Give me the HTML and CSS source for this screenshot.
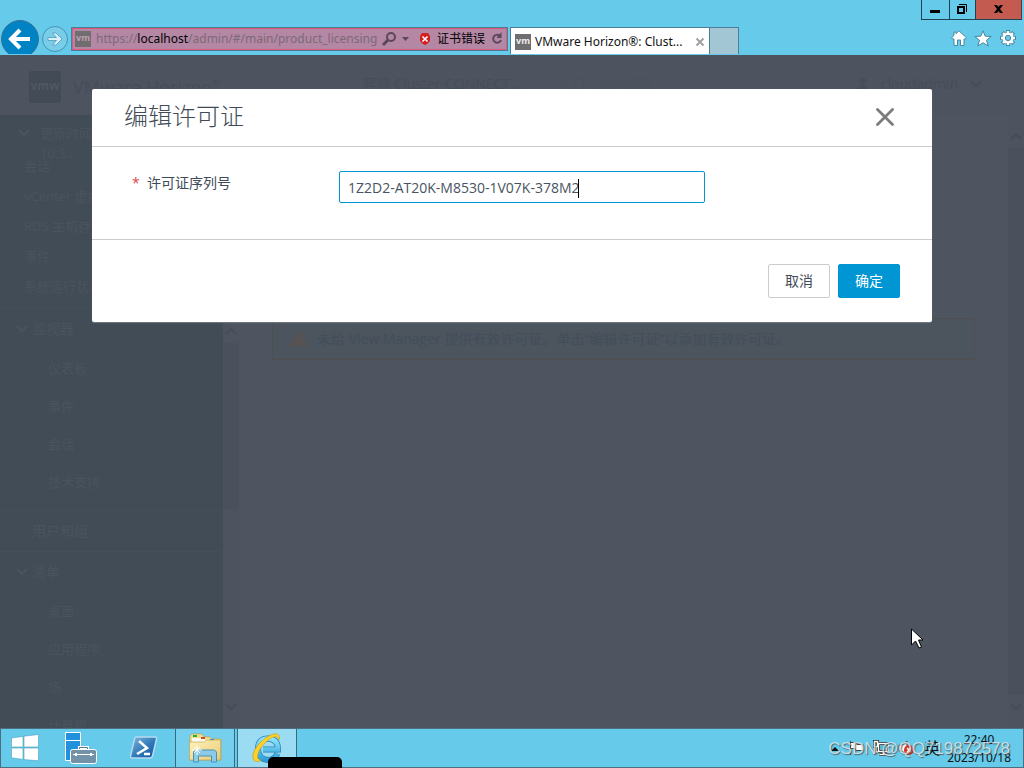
FILE: index.html
```html
<!DOCTYPE html>
<html lang="zh-CN">
<head>
<meta charset="utf-8">
<title>VMware Horizon®: Cluster</title>
<link rel="stylesheet" href="styles.css">
</head>
<body>
<header class="chrome">
  <div class="window-controls">
    <button class="win-btn" aria-label="最小化"><svg width="27" height="19" viewBox="0 0 27 19"><path d="M8 10h10v3H8z"/></svg></button>
    <button class="win-btn" aria-label="还原"><svg width="25" height="19" viewBox="0 0 25 19" fill="none" stroke="#000"><path d="M8 7h6v6H8z" stroke-width="2"/><path d="M9 4.500h7.500V12"/></svg></button>
    <button class="win-btn win-close" aria-label="关闭"><svg width="45" height="19" viewBox="0 0 45 19"><path d="M18 5h3l1.500 2L24 5h3l-3 4 3 4h-3l-1.500-2-1.500 2h-3l3-4z"/></svg></button>
  </div>
  <div class="nav">
    <button class="nav-back" aria-label="后退"><svg width="38" height="38" viewBox="0 0 38 38"><circle cx="19" cy="19" r="18.500" fill="#0083c5" stroke="#3a7390"/><path d="M29 19H11M19 10l-9 9 9 9" fill="none" stroke="#fff" stroke-width="4"/></svg></button>
    <button class="nav-forward" aria-label="前进"><svg width="28" height="28" viewBox="0 0 28 28"><circle cx="14" cy="14" r="12.500" fill="#7acde9" stroke="#4496b3"/><path d="M7 12.500h8.500l-4-4.500H15l6 6-6 6h-3.500l4-4.500H7z" fill="#d9f1fa" stroke="#4a9cbb" stroke-width=".8"/></svg></button>
    <div class="address">
      <span class="vm">vm</span>
      <span class="url">https://<b>localhost</b>/admin/#/main/product_licensing</span>
      <button class="plain" aria-label="搜索"><svg width="28" height="16" viewBox="0 0 28 16"><circle cx="9" cy="6" r="4" fill="none" stroke="#5b4757" stroke-width="2"/><path d="M6 9l-5 5" stroke="#5b4757" stroke-width="3"/><path d="M20 6h7l-3.500 4z" fill="#5b4757"/></svg></button>
      <span class="cert"><svg width="12" height="14" viewBox="0 0 12 14"><path d="M3 1h6l2 3v5l-3 3-2 1-2-1-3-3V4z" fill="#d21f1f"/><path d="M3.500 4.500l5 5m0-5l-5 5" stroke="#fff" stroke-width="1.600"/></svg>证书错误</span>
      <button class="plain" aria-label="刷新"><svg width="12" height="14" viewBox="0 0 12 14"><path d="M8.500 3.500A4 4 0 1 0 10 8" fill="none" stroke="#5b4757" stroke-width="2"/><path d="M10.500 0v6h-5z" fill="#5b4757"/></svg></button>
    </div>
    <div class="tab"><span class="vm">vm</span><span class="tab-title">VMware Horizon®: Clust...</span><button class="plain" aria-label="关闭选项卡"><svg width="10" height="10" viewBox="0 0 10 10"><path d="M1.500 1.500l7 7m0-7l-7 7" stroke="#a1a1a1" stroke-width="2"/></svg></button></div>
    <button class="new-tab" aria-label="新建选项卡"></button>
    <div class="tools">
      <button class="plain" aria-label="主页"><svg width="16" height="16" viewBox="0 0 16 16" fill="#fff" stroke="#4688a0"><path d="M8 .8l7.500 7-1 1.200H13v6.500H9.500V10h-3v5.500H3V9H1.500l-1-1.200L3 5.500V2h2v1.600z"/></svg></button>
      <button class="plain" aria-label="收藏夹"><svg width="18" height="17" viewBox="0 0 18 17"><path d="M9 .8l2.200 5.400 6 .3-4.700 3.700 1.700 5.800L9 12.700 3.800 16l1.700-5.800L.8 6.500l6-.3z" fill="#fff" stroke="#4688a0"/></svg></button>
      <button class="plain" aria-label="工具"><svg width="18" height="18" viewBox="0 0 18 18"><path d="M9 1v16M1 9h16M3.300 3.300l11.400 11.400m0-11.400L3.300 14.700" stroke="#4688a0" stroke-width="4"/><path d="M9 2v14M2 9h14M4 4l10 10m0-10L4 14" stroke="#fff" stroke-width="2.400"/><circle cx="9" cy="9" r="4.200" fill="#66caea" stroke="#fff" stroke-width="2.600"/><circle cx="9" cy="9" r="2.600" fill="none" stroke="#4688a0"/></svg></button>
    </div>
  </div>
</header>

<main class="viewport">
  <div class="app-header">
    <span class="logo">vmw</span><span class="brand">VMware Horizon<sup>®</sup></span>
    <span class="pod">容器 Cluster-CONNECT...</span>
    <span class="search"><svg width="13" height="13" viewBox="0 0 13 13" fill="none" stroke="currentColor"><circle cx="6" cy="6" r="5"/><path d="M9 9l4 4"/></svg>用户搜索</span>
    <span class="user"><svg width="12" height="12" viewBox="0 0 12 12" fill="currentColor"><circle cx="6" cy="3" r="3"/><path d="M1 12q0-5 5-5t5 5z"/></svg>cloudadmin<svg width="12" height="8" viewBox="0 0 12 8" fill="none" stroke="currentColor" stroke-width="2"><path d="M1 1l5 5 5-5"/></svg></span>
  </div>
  <div class="app-body">
    <nav class="sidebar">
      <div class="status">
        <div class="updated"><svg width="12" height="8" viewBox="0 0 12 8" class="chev"><path d="M1 1l5 5 5-5"/></svg><span>更新时间<br>10:3...</span></div>
        <ul class="status-list"><li>会话</li><li>vCenter 虚拟机</li><li>RDS 主机存储</li><li>事件</li><li>系统运行状况</li></ul>
      </div>
      <div class="menu">
        <div class="menu-main">
          <div class="group"><svg width="12" height="8" viewBox="0 0 12 8" class="chev"><path d="M1 1l5 5 5-5"/></svg>监视器</div>
          <ul class="items"><li>仪表板</li><li>事件</li><li>会话</li><li>技术支持</li></ul>
          <div class="single">用户和组</div>
          <div class="group"><svg width="12" height="8" viewBox="0 0 12 8" class="chev"><path d="M1 1l5 5 5-5"/></svg>清单</div>
          <ul class="items"><li>桌面</li><li>应用程序</li><li>场</li><li>计算机</li></ul>
        </div>
        <div class="scroll"><svg width="12" height="8" viewBox="0 0 12 8"><path d="M1 7l5-5 5 5"/></svg><i class="thumb short"></i><svg width="12" height="8" viewBox="0 0 12 8"><path d="M1 1l5 5 5-5"/></svg></div>
      </div>
    </nav>
    <section class="content">
      <div class="alert"><svg width="18" height="16" viewBox="0 0 18 16"><path d="M9 0l9 15H0z" fill="#585350"/><path d="M9 5v5m0 1v2" stroke="#4f545c" stroke-width="1.500"/></svg>未给 View Manager 提供有效许可证。单击“编辑许可证”以添加有效许可证。</div>
    </section>
    <div class="scroll page-scroll"><svg width="12" height="8" viewBox="0 0 12 8"><path d="M1 7l5-5 5 5"/></svg><i class="thumb"></i><svg width="12" height="8" viewBox="0 0 12 8"><path d="M1 1l5 5 5-5"/></svg></div>
  </div>
  <div class="overlay">
    <form class="modal" role="dialog" aria-labelledby="dialog-title">
      <div class="modal-head"><h1 id="dialog-title">编辑许可证</h1><button type="button" class="plain" aria-label="关闭"><svg width="18" height="18" viewBox="0 0 18 18"><path d="M1.500 1.500l15 15m0-15l-15 15" stroke="#7c7c7c" stroke-width="2.800" stroke-linecap="round"/></svg></button></div>
      <div class="modal-body"><label for="serial"><span class="required">*</span>许可证序列号</label><div class="field"><input id="serial" type="text" value="1Z2D2-AT20K-M8530-1V07K-378M2"><i class="caret"></i></div></div>
      <div class="modal-foot"><button type="button" class="btn">取消</button><button type="button" class="btn primary">确定</button></div>
    </form>
  </div>
  <svg class="pointer" width="14" height="22" viewBox="0 0 14 22"><path d="M.5 1v16l4-4 3.500 7 2.500-1-3-7H12z" fill="#fff" stroke="#000"/></svg>
</main>

<footer class="taskbar">
  <button class="task start" aria-label="开始"><svg width="28" height="28" viewBox="0 0 28 28" fill="#fff" stroke="#4ba1bd" stroke-width=".6"><path d="M.5 4l11.500-1.600V13H.5zM13 2.200L27.500.5V13H13zM.5 14H12v11.400L.5 23.800zM13 14h14.500v12.800L13 25.600z"/></svg></button>
  <button class="task" aria-label="服务器管理器"><svg width="34" height="34" viewBox="0 0 34 34" stroke="#fff"><path d="M1.500 1.500h15v28h-15z" fill="#2390dd"/><path d="M1 9.500h16"/><path d="M15.500 19v-2.500h8V19" fill="none" stroke-width="3"/><path d="M15.500 19v-2.500h8V19" fill="none" stroke="#5f7789"/><rect x="6.500" y="18.500" width="26" height="14" rx="2" fill="#7392a8"/><path d="M9 23.500h21"/><path d="M12 22v3m15-3v3" stroke-width="2"/></svg></button>
  <button class="task" aria-label="PowerShell"><svg width="28" height="24" viewBox="0 0 28 24"><defs><linearGradient id="ps" x2="1" y2="1"><stop stop-color="#83b9dc"/><stop offset=".55" stop-color="#2f78b9"/><stop offset="1" stop-color="#1b519e"/></linearGradient></defs><path d="M6 1h19q2 0 1.500 2l-4 17q-.5 2-2.500 2H2q-2 0-1.500-2l4-17Q5 1 6 1z" fill="url(#ps)" stroke="#b4dcef" stroke-width="1.500"/><path d="M9 5l8 7-10 6m7 0h6" fill="none" stroke="#fff" stroke-width="2.500"/></svg></button>
  <button class="task running" aria-label="文件资源管理器"><svg width="34" height="30" viewBox="0 0 34 30"><defs><linearGradient id="fold" x2="1" y2="1"><stop stop-color="#fff3bc"/><stop offset="1" stop-color="#e9cb74"/></linearGradient></defs><path d="M2 27V3l2-2h10l2 3h6l2 2h9v21z" fill="#f5dd8b" stroke="#b99b45" stroke-width=".6"/><path d="M4 5h13v2h14v4H4z" fill="#fffdf0"/><path d="M5 2h4v2H5z" fill="#18b43b"/><path d="M13 4h4v2h-4z" fill="#cf4a2c"/><path d="M22 6h4v2h-4z" fill="#2589dc"/><path d="M1.500 9h15l2-2h14v20h-31z" fill="url(#fold)" stroke="#bd9b46" stroke-width=".6"/><path d="M5.500 29V19l2-2h19l2 2v10h-5v-6h-13v6z" fill="#8bcbe7" stroke="#4a91b8"/><path d="M9 12v10m-5-5h10m-8-3l6 6m0-6l-6 6" stroke="#fff"/></svg></button>
  <button class="task running active" aria-label="Internet Explorer"><svg width="32" height="32" viewBox="0 0 32 32"><defs><linearGradient id="ie" x2="0" y2="1"><stop stop-color="#8ce4fb"/><stop offset="1" stop-color="#2c9fdb"/></linearGradient></defs><path d="M26.500 21.500q-3 6.500-9.500 6.500-10-1-10-11T17 6.500q10 .5 10 11H12" fill="none" stroke="#2b83b5" stroke-width="6"/><path d="M26.500 21.500q-3 6.500-9.500 6.500-10-1-10-11T17 6.500q10 .5 10 11H12" fill="none" stroke="url(#ie)" stroke-width="4.500"/><path d="M28 8c2-6-3-8-10-4C7 10-1 22 3 28c1 2 4 2 7 0-6 0-4-10 5-18 6-6 12-7 13-2z" fill="#ffd229" stroke="#cf9e19" stroke-width=".7"/></svg></button>
  <i class="redaction"></i>
  <div class="tray">
    <svg width="8" height="5" viewBox="0 0 8 5"><path d="M0 5l4-4 4 4z" fill="#111"/></svg>
    <svg width="16" height="16" viewBox="0 0 16 16"><path d="M2.500 1v14M3 2.500h5l1 2h6v6H8l-1-2H3" fill="#fff" stroke="#444"/></svg>
    <svg width="16" height="16" viewBox="0 0 16 16"><path d="M5.500 3.500h10v8h-10zM10.500 12v2.500m-4 0h8M1.500 1.500h3v5h-3zM3 7v5h2" fill="#5db5d0" stroke="#222" stroke-width="3"/><path d="M5.500 3.500h10v8h-10zM10.500 12v2.500m-4 0h8M1.500 1.500h3v5h-3zM3 7v5h2" fill="none" stroke="#fff" stroke-width="1.500"/></svg>
    <svg width="17" height="16" viewBox="0 0 17 16"><path d="M1 5h3l5-4v14l-5-4H1z" fill="#fff" stroke="#555"/><circle cx="11" cy="10" r="5" fill="#d83220"/><path d="M9 8l4 4m0-4l-4 4" stroke="#fff" stroke-width="1.500"/></svg>
    <span class="ime">英</span>
    <time class="clock">22:40<br>2023/10/18</time>
    <span class="watermark">CSDN @QQ719872578</span>
  </div>
</footer>
</body>
</html>
```
FILE: styles.css
```css
* { box-sizing: border-box; }
body { margin: 0; height: 100vh; display: flex; flex-direction: column; overflow: hidden; font: 13px/20px "Open Sans", "Noto Sans CJK SC", sans-serif; color: #414b57; background: #66caea; }
button { font: inherit; margin: 0; padding: 0; border: 0; background: none; }
svg { display: block; flex: none; }
ul { list-style: none; margin: 0; padding: 0; }
.plain { display: flex; align-items: center; }

.chrome { height: 55px; flex: none; font-family: "Noto Sans", "Noto Sans CJK SC", sans-serif; overflow: hidden; }
.window-controls { display: flex; justify-content: flex-end; height: 20px; padding-right: 2px; }
.win-btn { border: 1px solid #1e4250; border-top: 0; border-right: 0; height: 20px; }
.win-close { background: #c35b50; border-right: 1px solid #5b3330; }
.nav { display: flex; align-items: flex-start; height: 34px; overflow: hidden; padding-left: 1px; }
.nav-forward { margin: 5px 1px 0 2px; }
.nav-back { flex: none; }
.address { display: flex; align-items: center; flex: 0 1 437px; min-width: 0; height: 24px; margin: 7px 0 0 1px; padding: 0 4px 0 3px; gap: 4px; border: 1px solid #497f97; background: #b487a5; box-shadow: inset 0 0 0 1px #db5878; }
.vm { flex: none; width: 16px; height: 16px; background: #6f6d6f; color: #eee; font: bold 9px/14px "Open Sans", sans-serif; text-align: center; }
.address .vm { color: #bda0b2; margin-right: 1px; }
.url { flex: 1; overflow: hidden; white-space: nowrap; color: #7b6a77; font-size: 12px; }
.url b { font-weight: 400; color: #000; }
.cert { display: flex; align-items: center; gap: 6px; margin: 0 2px 0 5px; font-size: 12px; color: #000; white-space: nowrap; }
.tab { display: flex; align-items: center; flex: none; width: 200px; height: 28px; margin: 7px 0 0 2px; padding: 0 4px; gap: 4px; background: #fff; border: 1px solid #497f97; border-bottom: 0; color: #111; }
.tab-title { flex: 1; white-space: nowrap; font-size: 12px; }
.new-tab { width: 29px; height: 28px; margin-top: 7px; background: #a3c6d5; border: 1px solid #497f97; border-left: 0; border-bottom: 0; }
.tools { display: flex; align-items: center; gap: 7px; margin: 9px 7px 0 auto; }

.viewport { position: relative; display: flex; flex-direction: column; flex: 1; min-height: 0; overflow: hidden; background: #4e5460; }
.app-header { display: flex; flex: none; height: 60px; padding: 16px 42px 0 29px; background: #4d535f; color: #464e5a; white-space: nowrap; }
.logo { width: 32px; height: 32px; border-radius: 3px; background: #424b56; color: #4f5864; font: bold 12px/30px "Open Sans", sans-serif; text-align: center; }
.brand { margin-left: 12px; font-size: 18px; line-height: 32px; }
.brand sup { font-size: 10px; line-height: 0; }
.pod { margin-left: 142px; font-size: 14px; line-height: 26px; }
.search, .user { display: flex; align-items: center; gap: 12px; height: 26px; }
.search { margin-left: 52px; color: #4a525e; }
.user { margin-left: auto; font-size: 14px; }
.app-body { display: flex; flex: 1; min-height: 0; }
.sidebar { display: flex; flex-direction: column; flex: none; width: 239px; color: #4a535e; }
.chev { fill: none; stroke: #4a535e; stroke-width: 2; }
.status { flex: none; height: 194px; padding: 8px 0 0 18px; width: 223px; background: #424c57; border-bottom: 1px solid #454f59; }
.updated { display: flex; gap: 10px; height: 28px; }
.updated .chev { margin-top: 6px; }
.status-list { display: flex; flex-direction: column; gap: 10px; padding: 5px 0 0 6px; }
.menu { display: flex; flex: 1; min-height: 0; }
.menu-main { width: 223px; overflow: hidden; background: #424c57; }
.group { display: flex; align-items: center; height: 40px; padding-left: 16px; gap: 4px; font-size: 14px; }
.items { padding-left: 48px; }
.items li { height: 38px; line-height: 38px; }
.single { height: 42px; margin-top: 9px; padding-left: 32px; line-height: 40px; border: 1px solid #454f59; border-width: 1px 0; font-size: 14px; }
.scroll { display: flex; flex-direction: column; justify-content: space-between; align-items: center; width: 16px; padding: 18px 0 17px; background: #4d535f; }
.scroll svg { fill: none; stroke: #464c58; stroke-width: 2; }
.thumb { flex: 1; width: 16px; margin: 8px 0; background: #4a515d; }
.thumb.short { flex: none; height: 166px; margin-bottom: auto; }
.page-scroll { padding-top: 17px; }
.content { flex: 1; min-width: 0; padding: 203px 33px 0 33px; }
.alert { display: flex; align-items: center; gap: 9px; height: 42px; padding-left: 17px; border: 1px solid #504f4e; border-radius: 2px; background: #4c545e; color: #424e5b; font-size: 14px; white-space: nowrap; }
.overlay { position: absolute; inset: 0; padding: 34px 92px; }
.modal { background: #fff; border-radius: 2px; box-shadow: 0 1px 1px #737983; }
.modal-head { display: flex; justify-content: space-between; align-items: center; height: 58px; padding: 0 38px 2px 32px; border-bottom: 1px solid #ccc; }
.modal-head h1 { margin: 0; padding-bottom: 4px; font: 300 24px/32px "Noto Sans CJK SC", sans-serif; color: #414b57; }
.modal-body { display: flex; align-items: flex-start; height: 93px; padding: 24px 32px; border-bottom: 1px solid #ccc; font-size: 14px; }
.modal-body label { width: 215px; padding: 2px 0 0 8px; line-height: 20px; }
.required { display: inline-block; width: 15px; color: #d9484c; }
.field { position: relative; width: 366px; }
.field input { width: 100%; height: 32px; padding: 0 8px; border: 1px solid #0095d3; border-radius: 2px; outline: 0; font: inherit; color: #495462; }
.caret { position: absolute; left: 239px; top: 8px; width: 1px; height: 19px; background: #000; }
.modal-foot { display: flex; justify-content: flex-end; gap: 8px; padding: 24px 32px; }
.btn { width: 62px; height: 34px; border: 1px solid #ccc; border-radius: 2px; background: #fff; color: #414b57; font-size: 14px; }
.btn.primary { border-color: #0095d3; background: #0095d3; color: #fff; }
.pointer { position: absolute; left: 911px; top: 573px; }

.taskbar { position: relative; display: flex; flex: none; height: 40px; border: 1px solid #4b6f80; background: #66caea; }
.task { display: flex; align-items: center; justify-content: center; width: 64px; }
.task.start { width: 48px; }
.task:nth-child(3) { width: 62px; }
.task.running { width: 60px; border: 1px solid #346b80; border-width: 0 1px; background: #76cfec; }
.task.active { margin-left: 2px; background: #9cdcf2; }
.redaction { position: absolute; left: 267px; bottom: -1px; width: 74px; height: 11px; border-radius: 5px 5px 0 0; background: #000; }
.tray { position: relative; display: flex; align-items: center; gap: 9px; margin-left: auto; padding-right: 12px; color: #111; font-family: "Noto Sans", "Noto Sans CJK SC", sans-serif; }
.ime { font-size: 16px; }
.clock { font-size: 12px; line-height: 18px; text-align: center; padding-top: 2px; margin-left: -2px; }
.watermark { position: absolute; right: 13px; top: 11px; font: 17px/18px "Liberation Sans", sans-serif; color: #d4e2e8; opacity: .85; text-shadow: 1px 1px 1px #555; white-space: nowrap; }
```
